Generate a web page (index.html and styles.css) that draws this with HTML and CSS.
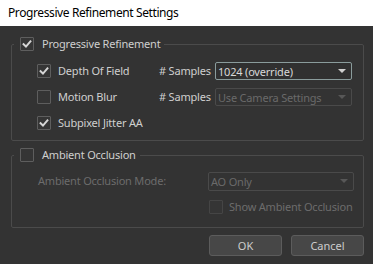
FILE: index.html
```html
<!DOCTYPE html>
<html>
<head>
<meta charset="utf-8">
<link rel="stylesheet" href="styles.css">
</head>
<body>
<div class="titlebar">Progressive Refinement Settings</div>
<div class="dialog">
  <fieldset class="group group-pr">
    <legend class="legend">
      <span class="cb checked"><svg viewBox="0 0 14 14"><path d="M3 7.2 L5.8 10 L11 4"/></svg></span>
      <span class="label">Progressive Refinement</span>
    </legend>
    <div class="rows">
      <div class="row">
        <div class="opt"><span class="cb checked"><svg viewBox="0 0 14 14"><path d="M3 7.2 L5.8 10 L11 4"/></svg></span><span class="label">Depth Of Field</span></div>
        <span class="label samples">#&nbsp;Samples</span>
        <div class="select focus"><span>1024 (override)</span><i class="arrow"></i></div>
      </div>
      <div class="row">
        <div class="opt"><span class="cb"></span><span class="label">Motion Blur</span></div>
        <span class="label samples">#&nbsp;Samples</span>
        <div class="select disabled"><span>Use Camera Settings</span><i class="arrow"></i></div>
      </div>
      <div class="row">
        <div class="opt"><span class="cb checked"><svg viewBox="0 0 14 14"><path d="M3 7.2 L5.8 10 L11 4"/></svg></span><span class="label">Subpixel Jitter AA</span></div>
      </div>
    </div>
  </fieldset>

  <fieldset class="group group-ao">
    <legend class="legend">
      <span class="cb"></span>
      <span class="label">Ambient Occlusion</span>
    </legend>
    <div class="rows ao-rows">
      <div class="row">
        <span class="label dim mode">Ambient Occlusion Mode:</span>
        <div class="select disabled wide"><span>AO Only</span><i class="arrow"></i></div>
      </div>
      <div class="row">
        <div class="opt show"><span class="cb disabled-cb"></span><span class="label dim">Show Ambient Occlusion</span></div>
      </div>
    </div>
  </fieldset>

  <div class="buttons">
    <button class="btn">OK</button>
    <button class="btn">Cancel</button>
  </div>
</div>
</body>
</html>
```
FILE: styles.css
```css
* { box-sizing: border-box; }
html, body { margin: 0; padding: 0; }
body {
  width: 373px;
  height: 264px;
  background: #333333;
  font-family: "Noto Sans", "Open Sans", sans-serif;
  overflow: hidden;
}
.titlebar {
  height: 26px;
  background: #ffffff;
  color: #000000;
  font-size: 12px;
  letter-spacing: -0.4px;
  line-height: 26px;
  padding-left: 8px;
}
.dialog {
  padding: 11px 9px 0 11px;
}
.group {
  margin: 0;
  border: 1px solid #4b4b4b;
  border-radius: 2px;
  padding: 11px 9px 8px 2px;
  min-width: 0;
}
.group-ao {
  margin-top: 7px;
  padding-top: 10px;
  padding-bottom: 11px;
}
.legend {
  display: flex;
  align-items: center;
  height: 14px;
  padding: 0 4px 0 6px;
  gap: 8px;
}
.cb {
  width: 14px;
  height: 14px;
  border: 1px solid #5e5e5e;
  border-radius: 1px;
  background: #353535;
  display: inline-flex;
  flex: none;
}
.cb svg {
  width: 12px;
  height: 12px;
}
.cb svg path {
  fill: none;
  stroke: #d6d6d6;
  stroke-width: 2.3;
  stroke-linecap: square;
}
.cb.disabled-cb { border-color: #454545; }
.label {
  color: #cfcfcf;
  font-size: 11px;
  letter-spacing: -0.2px;
  line-height: 14px;
  white-space: nowrap;
}
.label.dim { color: #6c6c6c; }
.rows {
  display: flex;
  flex-direction: column;
  gap: 8px;
  padding-left: 23px;
}
.row {
  display: flex;
  align-items: center;
  height: 18px;
}
.opt {
  display: flex;
  align-items: center;
  gap: 7px;
  width: 122px;
}
.samples { width: 56px; }
.select {
  width: 137px;
  height: 18px;
  border: 1px solid #4a4a4a;
  border-radius: 2px;
  display: flex;
  align-items: center;
  justify-content: space-between;
  padding: 0 5px 0 2px;
  font-size: 11px;
  letter-spacing: -0.2px;
  color: #d8d8d8;
}
.select.focus {
  border-color: #8a9c9c;
  background: #303030;
}
.select.disabled { color: #6a6a6a; }
.arrow {
  width: 0;
  height: 0;
  border-left: 4px solid transparent;
  border-right: 4px solid transparent;
  border-top: 4px solid #d0d0d0;
}
.select.disabled .arrow { border-top-color: #575757; }
.ao-rows {
  padding-left: 24px;
  gap: 8px;
}
.mode { width: 170px; }
.select.wide { width: 146px; height: 19px; }
.show { padding-left: 171px; width: auto; gap: 6px; }
.buttons {
  display: flex;
  justify-content: flex-end;
  gap: 9px;
  margin-top: 7px;
}
.btn {
  width: 73px;
  height: 21px;
  background: #474747;
  border: 1px solid #5c5c5c;
  border-radius: 3px;
  color: #cdcdcd;
  font-family: "Noto Sans", "Open Sans", sans-serif;
  font-size: 11px;
  padding: 0;
}
```
